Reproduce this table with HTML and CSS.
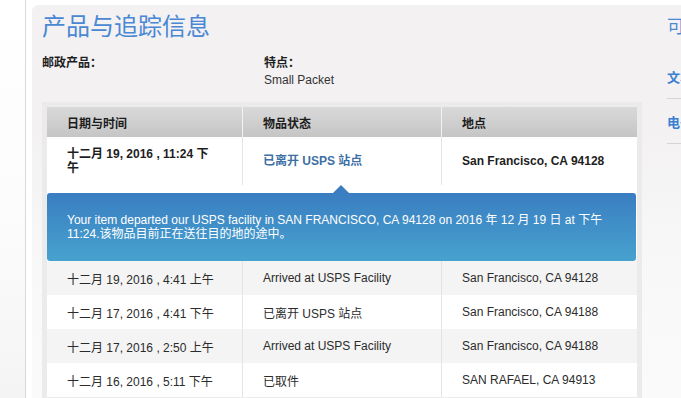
FILE: index.html
```html
<!DOCTYPE html>
<html lang="zh-CN">
<head>
<meta charset="utf-8">
<title>产品与追踪信息</title>
<link rel="stylesheet" href="styles.css">
</head>
<body>
<div class="page">
  <div class="rail"></div>
  <div class="panel">
    <main class="main">
      <h1 class="title">产品与追踪信息</h1>
      <div class="info">
        <div class="info-col info-col--product">
          <div class="info-label">邮政产品：</div>
        </div>
        <div class="info-col">
          <div class="info-label">特点：</div>
          <div class="info-value">Small Packet</div>
        </div>
      </div>

      <div class="history">
        <div class="track">
          <div class="row row--head">
            <div class="cell">日期与时间</div>
            <div class="cell">物品状态</div>
            <div class="cell">地点</div>
          </div>

          <div class="row row--latest">
            <div class="cell">十二月 19, 2016 , 11:24 下午</div>
            <div class="cell cell--status">已离开 USPS 站点</div>
            <div class="cell">San Francisco, CA 94128</div>
          </div>
          <div class="detail">
            <div class="callout">Your item departed our USPS facility in SAN FRANCISCO, CA 94128 on 2016 年 12 月 19 日 at 下午 11:24.该物品目前正在送往目的地的途中。</div>
          </div>

          <div class="row row--alt">
            <div class="cell">十二月 19, 2016 , 4:41 上午</div>
            <div class="cell">Arrived at USPS Facility</div>
            <div class="cell">San Francisco, CA 94128</div>
          </div>
          <div class="row">
            <div class="cell">十二月 17, 2016 , 4:41 下午</div>
            <div class="cell">已离开 USPS 站点</div>
            <div class="cell">San Francisco, CA 94188</div>
          </div>
          <div class="row row--alt">
            <div class="cell">十二月 17, 2016 , 2:50 上午</div>
            <div class="cell">Arrived at USPS Facility</div>
            <div class="cell">San Francisco, CA 94188</div>
          </div>
          <div class="row">
            <div class="cell">十二月 16, 2016 , 5:11 下午</div>
            <div class="cell">已取件</div>
            <div class="cell">SAN RAFAEL, CA 94913</div>
          </div>
        </div>
      </div>
    </main>

    <aside class="side">
      <h2 class="side-title">可用操作</h2>
      <ul class="side-links">
        <li class="side-link">文本更新</li>
        <li class="side-link">电子邮件更新</li>
      </ul>
    </aside>
  </div>
</div>
</body>
</html>
```

FILE: styles.css
```css
html, body {
  margin: 0;
  padding: 0;
}

body {
  width: 681px;
  height: 398px;
  overflow: hidden;
  background: #ffffff;
  font-family: "Liberation Sans", Arial, "Noto Sans CJK SC", sans-serif;
  font-size: 12px;
  color: #333333;
}

.page {
  display: flex;
  height: 398px;
}

/* thin left navigation rail */
.rail {
  flex: 0 0 25px;
  border-right: 1px solid #d9d9d9;
  background: linear-gradient(to bottom, #ffffff 0%, #fbfbfb 60%, #f4f4f4 100%);
}

.panel {
  flex: 0 0 auto;
  display: flex;
  margin: 5px 0 0 6px;
  padding-left: 10px;
  border-radius: 6px 0 0 0;
  background: linear-gradient(to bottom, #f3f1f2 0px, #f3f1f2 120px, #f8f8f8 260px, #fafafa 393px);
}

.main {
  flex: 0 0 600px;
  width: 600px;
}

.title {
  margin: 0;
  padding-top: 5px;
  font-size: 24px;
  line-height: 30px;
  font-weight: normal;
  color: #4a88d4;
  font-family: "Noto Sans CJK SC", "Liberation Sans", sans-serif;
}

.info {
  display: flex;
  margin-top: 15px;
  line-height: 17px;
}

.info-col--product {
  flex: 0 0 222px;
}

.info-label {
  font-weight: bold;
  color: #1e1e1e;
}

.info-value {
  color: #333333;
}

/* tracking history box */
.history {
  margin-top: 13px;
  padding: 5px;
  background: #ebebeb;
  height: 400px;
}

.track {
  width: 590px;
  background: #ffffff;
}

.row {
  display: grid;
  grid-template-columns: 196px 199px 195px;
  height: 34px;
  background: #ffffff;
}

.row--alt {
  background: #f4f4f4;
}

.cell {
  display: flex;
  align-items: center;
  padding: 0 20px;
  border-right: 1px solid #e4e4e4;
  color: #2b2b2b;
}

.cell:last-child {
  border-right: 0;
}

.row--head {
  height: 30px;
  background: linear-gradient(to bottom, #d9d9d9, #c5c5c5);
}

.row--head .cell {
  font-weight: bold;
  color: #1c1c1c;
  border-right-color: #f2f2f2;
}

.row--latest {
  height: 48px;
}

.row--latest .cell {
  font-weight: bold;
  color: #1e1e1e;
  line-height: 14px;
  padding-right: 24px;
}

.row--latest .cell--status {
  color: #3d6fa6;
}

/* expanded detail under the latest event */
.detail {
  padding: 8px 1px 0 0;
  background: #ffffff;
}

.callout {
  position: relative;
  padding: 20px;
  border-radius: 3px;
  line-height: 14px;
  color: #ffffff;
  background: linear-gradient(to bottom, #3a7ec1, #47a2cf);
}

.callout::before {
  content: "";
  position: absolute;
  left: 286px;
  top: -8px;
  border-left: 8px solid transparent;
  border-right: 8px solid transparent;
  border-bottom: 8px solid #3a7ec1;
}

/* side actions column */
.side {
  flex: 0 0 200px;
  margin-left: 25px;
}

.side-title {
  margin: 0;
  padding-top: 5px;
  font-size: 18px;
  line-height: 30px;
  font-weight: normal;
  color: #4a88d4;
  font-family: "Noto Sans CJK SC", "Liberation Sans", sans-serif;
}

.side-links {
  list-style: none;
  margin: 14px 0 0;
  padding: 0;
}

.side-link {
  display: flex;
  align-items: center;
  height: 44px;
  border-bottom: 1px solid #d4d4d4;
  font-size: 13px;
  font-weight: bold;
  color: #3a7fd2;
}
```
